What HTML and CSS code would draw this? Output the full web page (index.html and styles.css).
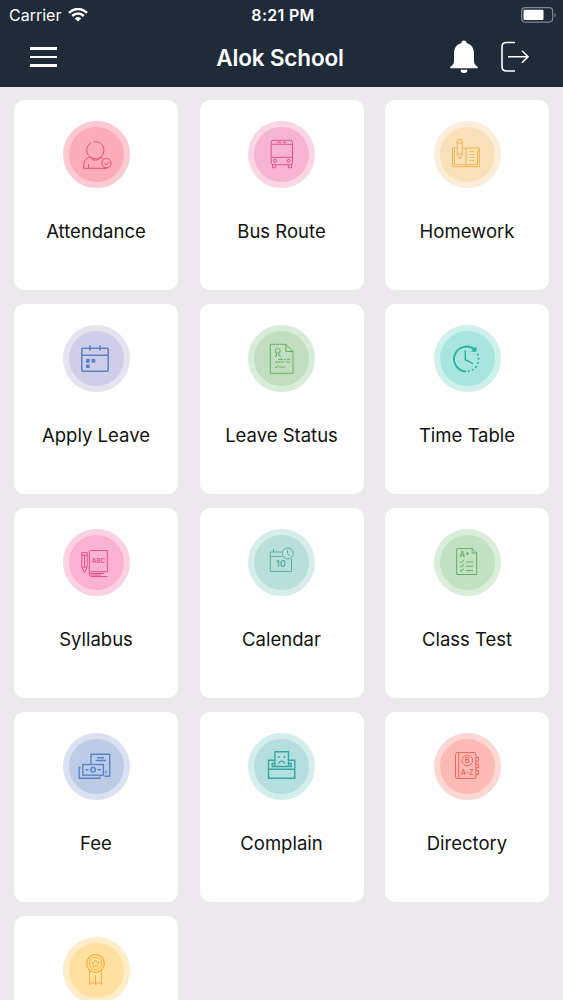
FILE: index.html
```html
<!DOCTYPE html>
<html lang="en">
<head>
    <meta charset="UTF-8">
    <meta name="viewport" content="width=device-width, initial-scale=1.0">
    <title>Alok School</title>
    <link rel="stylesheet" href="styles.css">
</head>
<body>
    <header>
        <div class="status-bar">
            <div class="carrier">
                <span>Carrier</span>
                <svg width="20" height="14" viewBox="0 0 20 14" fill="none" stroke="#fff" stroke-width="2.5">
                    <path d="M1 4.9 C6 -.3 14 -.3 19 4.9M4.2 8 C7.5 4.8 12.5 4.8 15.8 8"/>
                    <path d="M10 13.5 L6.8 10.4 Q10 7.8 13.2 10.4Z" fill="#fff" stroke="none"/>
                </svg>
            </div>
            <span class="clock">8:21 PM</span>
            <svg class="battery" width="36" height="16" viewBox="0 0 36 16">
                <rect x=".7" y=".7" width="31" height="14.4" rx="3.5" fill="none" stroke="#7f8790" stroke-width="1.2"/>
                <rect x="2.5" y="2.8" width="20" height="10.2" rx="1.2" fill="#fff"/>
                <path d="M33.5 5.5 Q36 8 33.5 10.5Z" fill="#7f8790"/>
            </svg>
        </div>
        <nav class="nav-bar">
            <div class="menu">
                <span></span>
                <span></span>
                <span></span>
            </div>
            <h1>Alok School</h1>
            <div class="actions">
                <svg width="28" height="34" viewBox="0 0 28 34" fill="#fff">
                    <path d="M14 .4a2.5 2.5 0 0 1 2.5 2.7C21.5 4.5 24 8.5 24 13.5v7.5c0 2.5 1 4 3.7 5.8v1.400H.3v-1.400C3 25 4 23.5 4 21v-7.5C4 8.5 6.5 4.5 11.5 3.1A2.5 2.5 0 0 1 14 .4zM10.6 29.7h6.800a3.4 3.4 0 0 1-6.800 0z"/>
                </svg>
                <svg width="30" height="32" viewBox="0 0 30 32" fill="none" stroke="#fff" stroke-width="1.6">
                    <path d="M15 1.5H6.5Q2 1.5 2 6v19.5Q2 30 6.5 30H15M8 15.8h20M22 9.8l6 6-6 6"/>
                </svg>
            </div>
        </nav>
    </header>

    <main class="menu-grid">
        <div class="card">
            <div class="icon attendance">
                <svg viewBox="0 0 67 67">
                    <path d="M29 21.8a8.6 8.6 0 1 0 2.6-1"/>
                    <path d="M27.8 36.3C23.5 37.5 21.5 40 21.5 47.3H45M38.6 36.3l2.7 1.2M28.5 36c1 4.2 8.8 4.2 9.8 0M26.5 43v4"/>
                    <circle cx="44.5" cy="42.2" r="4.7"/>
                    <path d="M42.3 42.2l1.7 1.7 2.9-3"/>
                </svg>
            </div>
            <p>Attendance</p>
        </div>
        <div class="card">
            <div class="icon bus">
                <svg viewBox="0 0 67 67">
                    <rect x="23.2" y="19.3" width="21.3" height="24.4" rx="2"/>
                    <path d="M23.2 23.3h21.3M23.2 36.3h21.3M29 21.3h4M35 21.3h3M24.5 43.7v3h3.2v-3M40.3 43.7v3h3.2v-3"/>
                    <circle cx="27" cy="39.7" r="1.5"/>
                    <circle cx="40.7" cy="39.7" r="1.5"/>
                </svg>
            </div>
            <p>Bus Route</p>
        </div>
        <div class="card">
            <div class="icon homework">
                <svg viewBox="0 0 67 67">
                    <path d="M24 27H19.5v18.7h26.8V27H34.5q-1.5 0-1.5 1.5Q33 27 31.5 27H29.3M33 28v17M21.5 29v14.7h10q1.5 0 1.5 1 0-1 1.5-1h10V29"/>
                    <path d="M24.2 20q0-1.3 1.2-1.3h2.6q1.2 0 1.2 1.3v13.5l-2.5 4.5-2.5-4.5zM24.2 22h5M24.2 33h5"/>
                    <path d="M36.5 30.5h5M36.5 33.5h5M36.5 36.5h5M36.5 39.5h5" stroke-dasharray="2 .7"/>
                </svg>
            </div>
            <p>Homework</p>
        </div>
        <div class="card">
            <div class="icon apply-leave">
                <svg viewBox="0 0 67 67">
                    <rect x="19.8" y="23.3" width="26.4" height="23" rx="1" stroke-width="1.5"/>
                    <path d="M20 30.2h26M28 20.5v5M38 20.5v5" stroke-width="1.5"/>
                    <path class="solid" d="M24 34h3.7v3.7H24zM29.6 34h3.7v3.7h-3.7zM24 39.4h3.7v3.7H24z"/>
                </svg>
            </div>
            <p>Apply Leave</p>
        </div>
        <div class="card">
            <div class="icon leave-status">
                <svg viewBox="0 0 67 67">
                    <path d="M22.3 19.3h15.5l7.2 7.2v21.8H22.3zM37.8 19.3v7.2H45"/>
                    <circle cx="29.7" cy="25.8" r="2.5"/>
                    <path d="M28.5 28v3h-1.8M31 28v3h1.8M30 34.3h5M36 34.3h2M39 34.3h3M27 37h9M38 37h4M27 42l1.2 1.2 2.2-3M31 42h6"/>
                </svg>
            </div>
            <p>Leave Status</p>
        </div>
        <div class="card">
            <div class="icon time-table">
                <svg viewBox="0 0 67 67">
                    <path d="M42 24.8A12.5 12.5 0 1 0 33 46.5" stroke-width="1.9"/>
                    <path class="solid" d="M43.5 21.5v5.3h-5.6z"/>
                    <path d="M44.8 29.5A12.5 12.5 0 0 1 34 46.5" stroke-width="2" stroke-linecap="round" stroke-dasharray=".1 4.2"/>
                    <path d="M32.3 25.5v9.2l7.7 4" stroke-width="1.5"/>
                </svg>
            </div>
            <p>Time Table</p>
        </div>
        <div class="card">
            <div class="icon syllabus">
                <svg viewBox="0 0 67 67">
                    <path d="M19.8 24.7h5.4v14.5l-2.7 5.5-2.7-5.5zM19.8 27.3h5.4M22.5 27.3V39M19.8 39.2h5.4"/>
                    <path d="M45.4 43.7V22.5H28.5q-1.2 0-1.2 1.2v22.5q0 2.3 1.8 2.3H45.5M45.4 43.7H28.5M28 45.5h14M29 47h10"/>
                    <text x="36.5" y="34.8" font-size="6.3" font-weight="600">ABC</text>
                </svg>
            </div>
            <p>Syllabus</p>
        </div>
        <div class="card">
            <div class="icon calendar">
                <svg viewBox="0 0 67 67">
                    <path d="M34 24H22.3v19.5h21.2V31M22.3 28.5h12M25.5 21v3"/>
                    <circle cx="39.8" cy="25.5" r="5.5"/>
                    <path d="M39.5 22v3.5l2 2.2"/>
                    <text x="32.8" y="39" font-size="9" font-weight="700">10</text>
                </svg>
            </div>
            <p>Calendar</p>
        </div>
        <div class="card">
            <div class="icon class-test">
                <svg viewBox="0 0 67 67">
                    <path d="M23.7 20.5h15.5l4.5 4.5v21.5h-20zM39.2 20.5V25h4.5"/>
                    <text x="29.3" y="29.3" font-size="7.5" font-weight="600">A</text>
                    <path d="M33 25.5h3M34.5 24v3M27 33.5l1.3 1.3 2.5-3M27 37.8l1.3 1.3 2.5-3M27 42.1l1.3 1.3 2.5-3M33 34h7M33 38.3h7M33 42.6h7"/>
                </svg>
            </div>
            <p>Class Test</p>
        </div>
        <div class="card">
            <div class="icon fee">
                <svg viewBox="0 0 67 67" stroke-width="1.4">
                    <path d="M29 32V22.3h18.7v22H42.5M33.5 28.5h10.3M35 25.7h7M44 38.5v3"/>
                    <rect x="20.8" y="32.5" width="20.6" height="10.7"/>
                    <circle cx="31.1" cy="37.8" r="2.3"/>
                    <path d="M23.5 37.8h3M35.7 37.8h3M18.5 35.5h-1.3v10.7h20.5V44.5"/>
                </svg>
            </div>
            <p>Fee</p>
        </div>
        <div class="card">
            <div class="icon complain">
                <svg viewBox="0 0 67 67" stroke-width="1.4">
                    <path d="M26.7 28.3h-6.2v18h26.3v-18h-6.3M20.5 37.2h26.3M26.7 31.5h-2.5v3h18.9v-3h-2.5"/>
                    <path d="M26.9 34.3V19.7h13.6v14.6M31 24v2M36.5 24v2M30.5 31.3q3.2-4.3 6.4 0"/>
                </svg>
            </div>
            <p>Complain</p>
        </div>
        <div class="card">
            <div class="icon directory">
                <svg viewBox="0 0 67 67">
                    <path d="M42.8 25V22q0-1.5-1.5-1.5H24.5q-2 0-2 2v22q0 2 2 2h16.8q1.5 0 1.5-1.5v-2.5M25.7 20.5v26"/>
                    <path d="M42.8 25.5h2.7v3.8h-2.7zM42.8 32h2.7v3.8h-2.7zM42.8 38.5h2.7v3.8h-2.7zM42.8 29v3M42.8 35.5v3"/>
                    <circle cx="34.3" cy="28.5" r="5.3"/>
                    <text x="34.3" y="31.3" font-size="7.5" font-weight="600">B</text>
                    <text x="34.2" y="43" font-size="7" font-weight="600">A-Z</text>
                </svg>
            </div>
            <p>Directory</p>
        </div>
        <div class="card">
            <div class="icon award">
                <svg viewBox="0 0 67 67">
                    <circle cx="33.5" cy="27.5" r="8.8" stroke-width="1.3"/>
                    <circle cx="33.5" cy="27.5" r="6.2"/>
                    <path d="M33.5 23.8l1.2 2.4 2.7.4-2 1.9.5 2.6-2.4-1.3-2.4 1.3.5-2.6-2-1.9 2.7-.4zM27.6 34v14.5l3-2.2 2.9 2.2V39M39.4 34v14.5l-3-2.2-2.9 2.2"/>
                </svg>
            </div>
        </div>
    </main>
</body>
</html>
```
FILE: styles.css
```css
/* General Body Styling */
* {
    box-sizing: border-box;
}

body {
    font-family: Inter, Roboto, sans-serif;
    margin: 0;
    height: 1000px;
    overflow: hidden;
    background-color: #ebe9eb;
    color: #111;
}

/* Header Styling */
header {
    height: 87px;
    background-color: #1f2b38;
    color: white;
}

.status-bar {
    display: grid;
    grid-template-columns: 1fr auto 1fr;
    align-items: center;
    height: 29px;
    padding: 0 6px 0 9px;
    font-size: 16px;
}

.carrier {
    display: flex;
    align-items: center;
    gap: 7px;
}

.clock {
    font-weight: 600;
    letter-spacing: 0.3px;
}

.battery {
    justify-self: end;
}

.nav-bar {
    display: grid;
    grid-template-columns: 1fr auto 1fr;
    align-items: center;
    height: 56px;
    padding: 0 33px 0 30px;
}

.menu {
    display: flex;
    flex-direction: column;
    gap: 5.5px;
    width: 27px;
}

.menu span {
    height: 2.7px;
    background-color: #fff;
}

h1 {
    margin: 0;
    font-size: 22.5px;
    font-weight: 600;
    letter-spacing: -0.15px;
}

.actions {
    display: flex;
    align-items: center;
    justify-content: flex-end;
    gap: 22px;
}

/* Menu Cards */
.menu-grid {
    display: grid;
    grid-template-columns: repeat(3, 164px);
    grid-auto-rows: 190px;
    justify-content: space-between;
    row-gap: 13.8px;
    height: 913px;
    overflow: hidden;
    padding: 13.4px 14px 0;
}

.card {
    display: flex;
    flex-direction: column;
    align-items: center;
    padding-top: 21px;
    border-radius: 10px;
    background-color: #fff;
}

.card p {
    margin: 31px 0 0;
    font-size: 18.5px;
    line-height: 25px;
}

/* Round Icons */
.icon {
    width: 67px;
    height: 67px;
    border: 6.5px solid;
    border-radius: 50%;
}

.icon svg {
    display: block;
    width: 67px;
    height: 67px;
    margin: -6.5px;
    fill: none;
    stroke: currentColor;
}

.icon .solid,
.icon text {
    fill: currentColor;
    stroke: none;
}

.icon text {
    text-anchor: middle;
}

.attendance {
    color: #e75070;
    background-color: #fcabb9;
    border-color: #fdcad3;
}

.bus {
    color: #dd528c;
    background-color: #f7b4d0;
    border-color: #fad5e4;
}

.homework {
    color: #ecb64d;
    background-color: #f9e0b8;
    border-color: #fceddb;
}

.apply-leave {
    color: #5b80c4;
    background-color: #cfcee8;
    border-color: #e4e3ef;
}

.leave-status {
    color: #65b364;
    background-color: #c1dfc0;
    border-color: #d8edd7;
}

.time-table {
    color: #27b3a5;
    background-color: #a9e5df;
    border-color: #cff1ee;
}

.syllabus {
    color: #e3518e;
    background-color: #fab2d0;
    border-color: #fbd1e3;
}

.calendar {
    color: #5bb1a8;
    background-color: #b9dfd9;
    border-color: #d7edea;
}

.class-test {
    color: #66ae6b;
    background-color: #c1e1c0;
    border-color: #daeeda;
}

.fee {
    color: #5a84c8;
    background-color: #bccce7;
    border-color: #dae1f1;
}

.complain {
    color: #35a7a4;
    background-color: #b5dfdf;
    border-color: #d4eeed;
}

.directory {
    color: #ec6560;
    background-color: #fbbab5;
    border-color: #fdd7d4;
}

.award {
    color: #f3b13c;
    background-color: #fee1a0;
    border-color: #feedc9;
}
```
